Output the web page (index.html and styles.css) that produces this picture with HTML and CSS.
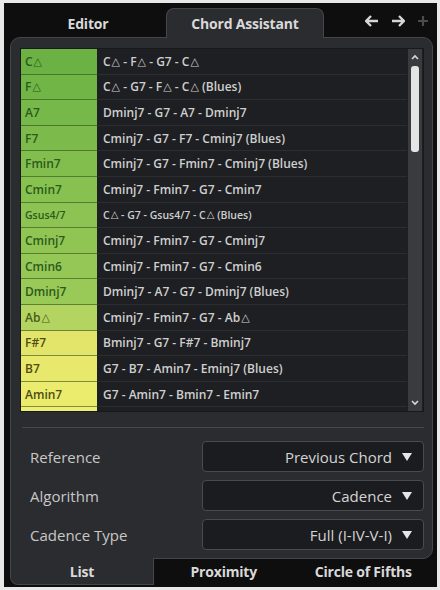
FILE: index.html
```html
<!DOCTYPE html>
<html lang="en">

<head>
  <meta charset="UTF-8">
  <meta name="viewport" content="width=device-width, initial-scale=1.0">
  <title>Chord Assistant</title>
  <link rel="stylesheet" href="styles.css">
</head>

<body>
  <div class="window">

    <div class="top-tabs">
      <div class="tab">Editor</div>
      <div class="tab active">Chord Assistant</div>
      <div class="nav">
        <svg width="14" height="12" viewBox="0 0 14 12"><path d="M6 1 L1 6 L6 11 M1 6 H13" fill="none" stroke="#d6d6d6" stroke-width="2.4" stroke-linejoin="round"/></svg>
        <svg width="14" height="12" viewBox="0 0 14 12"><path d="M8 1 L13 6 L8 11 M13 6 H1" fill="none" stroke="#d6d6d6" stroke-width="2.4" stroke-linejoin="round"/></svg>
        <svg width="12" height="12" viewBox="0 0 12 12"><path d="M6 1 V11 M1 6 H11" fill="none" stroke="#4a4b4e" stroke-width="2.2"/></svg>
      </div>
    </div>

    <div class="panel">
      <div class="list">
        <div class="rows">
          <div class="row"><span class="chord c1">C<i class="tri">&#9651;</i></span><span class="prog">C<i class="tri">&#9651;</i> - F<i class="tri">&#9651;</i> - G7 - C<i class="tri">&#9651;</i></span></div>
          <div class="row"><span class="chord c2">F<i class="tri">&#9651;</i></span><span class="prog">C<i class="tri">&#9651;</i> - G7 - F<i class="tri">&#9651;</i> - C<i class="tri">&#9651;</i> (Blues)</span></div>
          <div class="row"><span class="chord c3">A7</span><span class="prog">Dminj7 - G7 - A7 - Dminj7</span></div>
          <div class="row"><span class="chord c4">F7</span><span class="prog">Cminj7 - G7 - F7 - Cminj7 (Blues)</span></div>
          <div class="row"><span class="chord c5">Fmin7</span><span class="prog">Cminj7 - G7 - Fmin7 - Cminj7 (Blues)</span></div>
          <div class="row"><span class="chord c6">Cmin7</span><span class="prog">Cminj7 - Fmin7 - G7 - Cmin7</span></div>
          <div class="row"><span class="chord c7 small">Gsus4/7</span><span class="prog small">C<i class="tri">&#9651;</i> - G7 - Gsus4/7 - C<i class="tri">&#9651;</i> (Blues)</span></div>
          <div class="row"><span class="chord c8">Cminj7</span><span class="prog">Cminj7 - Fmin7 - G7 - Cminj7</span></div>
          <div class="row"><span class="chord c9">Cmin6</span><span class="prog">Cminj7 - Fmin7 - G7 - Cmin6</span></div>
          <div class="row"><span class="chord c10">Dminj7</span><span class="prog">Dminj7 - A7 - G7 - Dminj7 (Blues)</span></div>
          <div class="row"><span class="chord c11">Ab<i class="tri">&#9651;</i></span><span class="prog">Cminj7 - Fmin7 - G7 - Ab<i class="tri">&#9651;</i></span></div>
          <div class="row"><span class="chord c12">F#7</span><span class="prog">Bminj7 - G7 - F#7 - Bminj7</span></div>
          <div class="row"><span class="chord c13">B7</span><span class="prog">G7 - B7 - Amin7 - Eminj7 (Blues)</span></div>
          <div class="row"><span class="chord c14">Amin7</span><span class="prog">G7 - Amin7 - Bmin7 - Emin7</span></div>
          <div class="row"><span class="chord c15"></span><span class="prog"></span></div>
        </div>
        <div class="scrollbar">
          <svg width="10" height="8" viewBox="0 0 10 8"><path d="M2 6 L5 3 L8 6" fill="none" stroke="#d8d8d8" stroke-width="1.6"/></svg>
          <div class="thumb-area"><div class="thumb"></div></div>
          <svg width="10" height="8" viewBox="0 0 10 8"><path d="M2 2 L5 5 L8 2" fill="none" stroke="#d8d8d8" stroke-width="1.6"/></svg>
        </div>
      </div>

      <div class="sep"></div>

      <div class="settings">
        <div class="setting">
          <span class="label">Reference</span>
          <div class="dropdown">Previous Chord <svg width="10" height="8" viewBox="0 0 10 8"><path d="M0 0 H10 L5 8 Z" fill="#e6e6e6"/></svg></div>
        </div>
        <div class="setting">
          <span class="label">Algorithm</span>
          <div class="dropdown">Cadence <svg width="10" height="8" viewBox="0 0 10 8"><path d="M0 0 H10 L5 8 Z" fill="#e6e6e6"/></svg></div>
        </div>
        <div class="setting">
          <span class="label">Cadence Type</span>
          <div class="dropdown">Full (I-IV-V-I) <svg width="10" height="8" viewBox="0 0 10 8"><path d="M0 0 H10 L5 8 Z" fill="#e6e6e6"/></svg></div>
        </div>
      </div>
    </div>

    <div class="bottom-tabs">
      <div class="btab active">List</div>
      <div class="btab">Proximity</div>
      <div class="btab">Circle of Fifths</div>
    </div>

  </div>
</body>

</html>
```

FILE: styles.css
```css
body {
  margin: 0;
  padding: 3px 3px 3px 4px;
  background-color: #e9e9e9;
  font-family: 'Open Sans', 'Noto Sans', sans-serif;
}

.window {
  width: 433px;
  height: 584px;
  background-color: #0e0e0f;
  display: flex;
  flex-direction: column;
}

/* top tabs */
.top-tabs {
  display: flex;
  align-items: flex-end;
  height: 34px;
  padding-left: 6px;
}

.tab {
  width: 156px;
  height: 28px;
  display: flex;
  align-items: center;
  justify-content: center;
  font-size: 14px;
  font-weight: 700;
  color: #d9d9d9;
  letter-spacing: -0.2px;
}

.tab.active {
  background-color: #2b2c2f;
  border: 1px solid #45464a;
  border-bottom: none;
  border-radius: 8px 8px 0 0;
  margin-bottom: -1px;
  position: relative;
  z-index: 2;
  height: 29px;
}

.nav {
  flex: 1;
  display: flex;
  justify-content: flex-end;
  align-items: center;
  gap: 12px;
  height: 28px;
  padding-right: 8px;
  padding-bottom: 2px;
}

/* main panel */
.panel {
  margin: 0 4px 0 6px;
  background-color: #2b2c2f;
  border: 1px solid #45464a;
  border-radius: 10px 10px 10px 0;
  padding: 10px 8px 8px 9px;
}

.list {
  height: 362px;
  background-color: #1e1f22;
  border: 1px solid #18191b;
  display: flex;
  overflow: hidden;
}

.rows {
  flex: 1;
}

.row {
  display: flex;
  height: 25.6px;
  font-size: 12px;
  font-weight: 600;
}

.chord {
  width: 76px;
  padding-left: 4px;
  box-sizing: border-box;
  display: flex;
  align-items: center;
  color: #2d5a1c;
  border-bottom: 1px solid rgba(40, 70, 20, 0.55);
}

.prog {
  flex: 1;
  padding-left: 6px;
  display: flex;
  align-items: center;
  color: #cfcfcf;
  border-bottom: 1px solid #2c2d31;
  white-space: pre;
}

.tri {
  font-style: normal;
  font-family: 'DejaVu Sans', sans-serif;
  font-size: 11px;
  font-weight: 700;
  padding-left: 1px;
}

.small {
  font-size: 10.5px;
}

.small .tri {
  font-size: 10px;
}

.c1 { background-color: #6bb144; }
.c2 { background-color: #71b546; }
.c3 { background-color: #76b849; }
.c4 { background-color: #7bba4b; }
.c5 { background-color: #82be4e; }
.c6 { background-color: #87c150; }
.c7 { background-color: #8cc352; }
.c8 { background-color: #90c554; }
.c9 { background-color: #94c756; }
.c10 { background-color: #99c957; }
.c11 { background-color: #b3d460; color: #4a5a1c; }
.c12 { background-color: #e2e56a; color: #4d4d12; }
.c13 { background-color: #e7e86c; color: #4d4d12; }
.c14 { background-color: #ebeb6e; color: #4d4d12; }
.c15 { background-color: #eeee72; }

.scrollbar {
  width: 14px;
  margin: 0 1px 0 1px;
  background-color: #3a3b3f;
  display: flex;
  flex-direction: column;
  align-items: center;
  padding: 4px 0;
}

.thumb-area {
  flex: 1;
  width: 100%;
  display: flex;
  justify-content: center;
  padding-top: 5px;
}

.thumb {
  width: 8px;
  height: 86px;
  background-color: #e4e4e4;
  border-radius: 3px;
}

.sep {
  height: 1px;
  background-color: #47484c;
  margin: 15px 0 13px 2px;
}

/* settings */
.settings {
  display: flex;
  flex-direction: column;
  gap: 8px;
}

.setting {
  display: flex;
  align-items: center;
  justify-content: space-between;
}

.label {
  padding-left: 10px;
  font-size: 15px;
  color: #c8c8c8;
}

.dropdown {
  width: 222px;
  height: 31px;
  box-sizing: border-box;
  background-color: #1b1c1f;
  border: 1px solid #4a4b4f;
  border-radius: 4px;
  display: flex;
  align-items: center;
  justify-content: flex-end;
  gap: 10px;
  padding-right: 11px;
  font-size: 15px;
  color: #d4d4d4;
}

/* bottom tabs */
.bottom-tabs {
  display: flex;
  margin: -1px 4px 0 6px;
  height: 27px;
}

.btab {
  flex: 1;
  display: flex;
  align-items: center;
  justify-content: center;
  font-size: 14px;
  font-weight: 700;
  color: #d9d9d9;
  letter-spacing: -0.2px;
}

.btab.active {
  flex: none;
  width: 142px;
  background-color: #2b2c2f;
  border: 1px solid #45464a;
  border-top: none;
  border-radius: 0 0 0 8px;
}
```
